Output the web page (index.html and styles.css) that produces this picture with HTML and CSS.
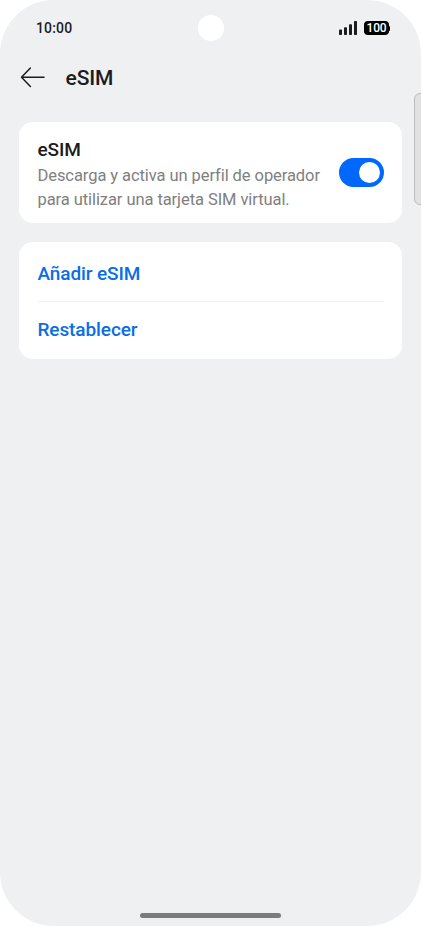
FILE: index.html
```
<!DOCTYPE html>
<html lang="es">
<head>
<meta charset="utf-8">
<title>eSIM</title>
<link rel="stylesheet" href="styles.css">
</head>
<body>
<main class="phone">
  <div class="status">
    <span class="time">10:00</span>
    <div class="indicators">
      <svg class="signal" width="19" height="14" viewBox="0 0 19 14" fill="#1b1c1e"><rect x="0" y="8.5" width="3" height="5.5" rx=".8"/><rect x="5" y="6.2" width="3" height="7.8" rx=".8"/><rect x="10" y="3.2" width="3" height="10.8" rx=".8"/><rect x="15" y="0" width="3" height="14" rx=".8"/></svg>
      <span class="battery">100</span>
    </div>
    <span class="camera"></span>
  </div>
  <header class="header">
    <svg class="back" width="26" height="22" viewBox="0 0 26 22" fill="none" stroke="#1b1c1e" stroke-width="1.5" stroke-linecap="round" stroke-linejoin="round"><path d="M24 10.3H1.5M10.4 1.1L1.5 10.3l8.9 9.2"/></svg>
    <h1 class="title">eSIM</h1>
  </header>
  <section class="card setting">
    <div class="copy">
      <h2 class="name">eSIM</h2>
      <p class="desc">Descarga y activa un perfil de operador<br>para utilizar una tarjeta SIM virtual.</p>
    </div>
    <span class="switch" role="switch" aria-checked="true"><span class="knob"></span></span>
  </section>
  <section class="card actions">
    <a class="action">Añadir eSIM</a>
    <a class="action">Restablecer</a>
  </section>
  <span class="edge"></span>
  <div class="home"></div>
</main>
</body>
</html>
```
FILE: styles.css
```
* { box-sizing: border-box; }
body { margin: 0; background: #fff; font-family: Roboto, sans-serif; color: #1b1c1e; }
h1, h2, p { margin: 0; font-weight: 500; }
.phone {
  position: relative;
  width: 421px;
  height: 926px;
  overflow: hidden;
  display: flex;
  flex-direction: column;
  padding: 0 19px;
  background: #eff0f2;
  border-radius: 54px;
}
.status {
  position: relative;
  height: 56px;
  display: flex;
  align-items: center;
  justify-content: space-between;
  padding: 0 13px 0 17px;
}
.time { font-size: 14px; font-weight: 500; letter-spacing: .15px; }
.indicators { display: flex; align-items: center; gap: 6px; }
.battery {
  position: relative;
  width: 25px;
  height: 14px;
  border-radius: 4px;
  background: #000;
  color: #fff;
  font-size: 12px;
  font-weight: 500;
  line-height: 15px;
  letter-spacing: -.2px;
  text-align: center;
}
.battery::after {
  content: "";
  position: absolute;
  right: -1px;
  top: 4.5px;
  width: 2px;
  height: 5px;
  border-radius: 1px;
  background: #000;
}
.camera {
  position: absolute;
  left: 179px;
  top: 15px;
  width: 26px;
  height: 26px;
  border-radius: 50%;
  background: #fff;
}
.header { height: 66px; display: flex; align-items: center; padding: 0 0 22px 1px; gap: 19.5px; }
.title { font-size: 21px; line-height: 26px; letter-spacing: -.1px; }
.card { background: #fff; border-radius: 14px; padding: 0 18.5px; }
.setting { height: 101px; display: flex; align-items: center; justify-content: space-between; }
.copy { padding-top: 4px; }
.name { font-size: 19px; line-height: 24px; margin-top: 1px; letter-spacing: -.1px; }
.desc { font-size: 16.5px; font-weight: 400; line-height: 24px; letter-spacing: -.075px; color: #808080; white-space: nowrap; margin-top: 2px; }
.switch { width: 45px; height: 29px; border-radius: 15px; background: #0067ff; padding: 4px; display: flex; justify-content: flex-end; }
.knob { width: 21px; height: 21px; border-radius: 50%; background: #fff; }
.actions { height: 117px; margin-top: 19px; display: flex; flex-direction: column; }
.action { height: 59px; display: flex; align-items: center; padding-top: 3px; font-size: 19px; font-weight: 500; letter-spacing: -.1px; color: #0b6de6; }
.action + .action { height: 58px; border-top: 1px solid #f2f2f2; padding: 0 0 2px; }
.edge {
  position: absolute;
  left: 414px;
  top: 93px;
  width: 14px;
  height: 112px;
  background: #e0e1e1;
  border: 1px solid #bcbdbd;
  border-radius: 6px;
}
.home { width: 141px; height: 5px; border-radius: 3px; background: #7b7b7b; margin: auto auto 8px; }
```
